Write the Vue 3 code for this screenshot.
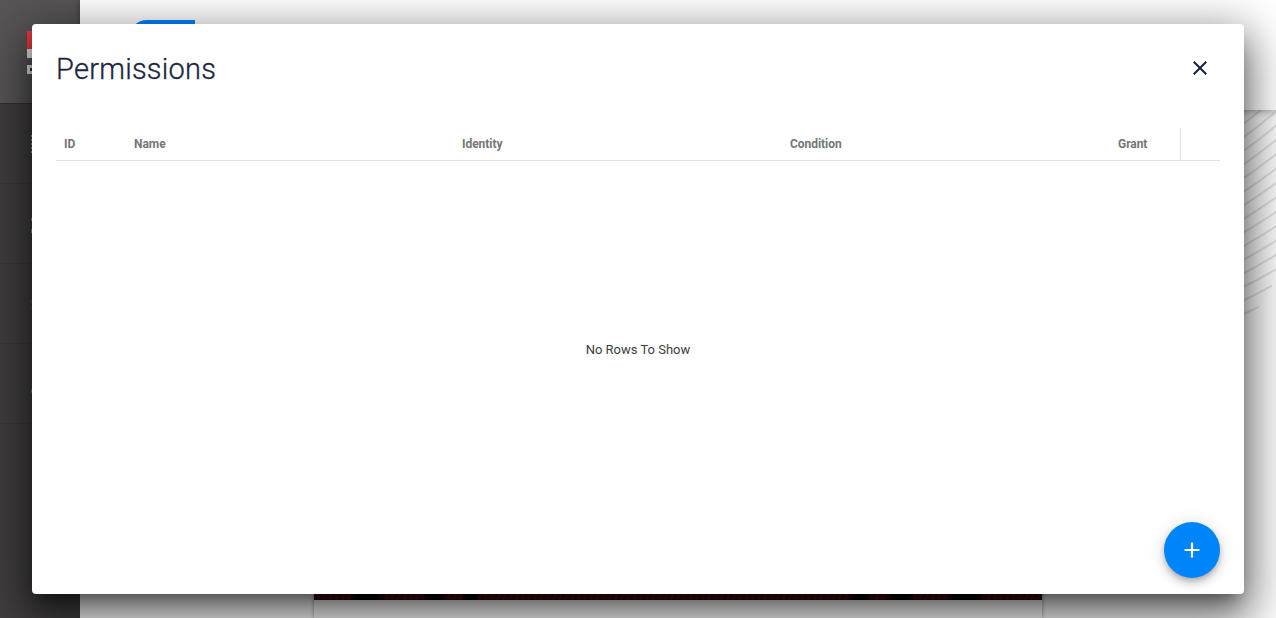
<script setup>
const columns = [
  { label: 'ID', key: 'id' },
  { label: 'Name', key: 'name' },
  { label: 'Identity', key: 'identity' },
  { label: 'Condition', key: 'condition' },
  { label: 'Grant', key: 'grant' },
]
const waves = Array.from({ length: 17 }, (_, i) => {
  const n = i - 2
  const y = 13 + n * 13.6
  const rise = 27 - n * 0.8
  const end = n === 14 ? 15 : n === 13 ? 28 : 33
  return `M-1 ${y + 1} Q 15 ${y - rise * 0.4} ${end} ${y - rise * (end / 33)}`
})
</script>

<template>
  <div class="page">
    <aside class="sidebar">
      <div class="brand"><svg width="53" height="44" viewBox="0 0 53 44"><path fill="#f03a3e" d="M0 0h20v18H0z" /><path fill="#e8e8e8" d="M0 18h20v9H0zM0 34h20v9H0z" /><path fill="#343233" d="M3 37h10v3H3z" /></svg></div>
      <nav>
        <div class="item"><svg width="49" height="40" viewBox="0 0 49 40"><path stroke="#aaa" stroke-dasharray="2 2" d="M.5 11v18" /></svg></div>
        <div class="item"><svg width="49" height="40" viewBox="0 0 49 40"><path stroke="#999" d="M.5 14v3M.5 25v4" /></svg></div>
        <div class="item"><svg width="49" height="40" viewBox="0 0 49 40"><path stroke="#555" d="M.5 16v3M.5 23v2" /></svg></div>
        <div class="item"><svg width="49" height="40" viewBox="0 0 49 40"><path stroke="#888" d="M1 25l-1 4" /></svg></div>
      </nav>
    </aside>
    <main class="main">
      <header class="topbar"><span class="pill"></span></header>
      <div class="content">
        <div class="sheet">
          <div class="photo"></div>
        </div>
        <svg class="waves" width="32" height="210" viewBox="0 0 32 210">
          <path v-for="d in waves" :key="d" :d="d" />
        </svg>
      </div>
    </main>

    <section class="dialog">
      <div class="heading">
        <h1>Permissions</h1>
        <button class="close" aria-label="Close">
          <svg width="24" height="24" viewBox="0 0 24 24"><path fill="currentColor" d="M19 6.41 17.59 5 12 10.59 6.41 5 5 6.41 10.59 12 5 17.59 6.41 19 12 13.41 17.59 19 19 17.59 13.41 12z" /></svg>
        </button>
      </div>
      <div class="grid">
        <div class="grid-head">
          <span v-for="c in columns" :key="c.key" :class="['cell', c.key]">{{ c.label }}</span>
        </div>
        <div class="empty">No Rows To Show</div>
      </div>
      <button class="fab" aria-label="Add">
        <svg width="24" height="24" viewBox="0 0 24 24"><path fill="#fff" d="M19.5 13.1h-6.4v6.4h-2.2v-6.4H4.5v-2.2h6.4V4.5h2.2v6.4h6.4z" /></svg>
      </button>
    </section>
  </div>
</template>

<style>
body { margin: 0; overflow: hidden; }
</style>

<style scoped>
.page { position: relative; display: flex; width: 100%; height: 100vh; overflow: hidden; background: #fff; font-family: Roboto, "Liberation Sans", sans-serif; }
.sidebar { width: 80px; flex: none; background: #403e3f; }
.brand { box-sizing: border-box; height: 103px; padding: 31px 0 0 27px; background: #575556; }
nav { border-top: 1px solid #333132; }
.item { box-sizing: border-box; height: 80px; padding: 20px 0 0 31px; border-bottom: 1px solid #3a3839; }
svg { display: block; }
.main { flex: 1; display: flex; flex-direction: column; }
.topbar { position: relative; box-sizing: border-box; height: 110px; flex: none; padding: 20px 0 0 49px; background: #fff; box-shadow: 0 1px 8px rgba(0,0,0,.4); }
.pill { display: block; width: 66px; height: 36px; background: #0084ff; border-radius: 18px 0 0 18px; }
.content { flex: 1; display: flex; justify-content: space-between; background: #fafafa; }
.sheet { width: 728px; margin-left: 234px; background: #fafafa; box-shadow: 0 0 4px rgba(0,0,0,.4); }
.photo { height: 490px; background: linear-gradient(90deg, transparent 36px, #000 44px 60px, transparent 72px 108px, #000 114px 126px, transparent 132px 148px, #000 152px 160px, transparent 166px 535px, #000 541px 550px, transparent 558px 572px, #000 580px 592px, transparent 602px 634px, #000 640px 662px, transparent 670px), repeating-linear-gradient(105deg, #40090d 0 3px, #5a1419 4px, #300609 6px); }
.waves { fill: none; stroke: #dedede; stroke-width: 2; }
.dialog { position: absolute; inset: 24px 32px; box-sizing: border-box; padding: 24px; display: flex; flex-direction: column; background: #fff; border-radius: 4px; box-shadow: 0 11px 15px -7px rgba(0,0,0,.4), 0 24px 38px 3px rgba(0,0,0,.35), 0 9px 46px 8px rgba(0,0,0,.32); }
.heading { display: flex; justify-content: space-between; height: 80px; color: #1b2440; }
h1 { margin: 0; font-size: 29px; line-height: 42px; font-weight: 300; letter-spacing: .25px; -webkit-text-stroke: .3px currentColor; }
button { border: 0; padding: 0; display: flex; align-items: center; justify-content: center; }
.close { width: 40px; height: 40px; background: none; color: inherit; }
.grid { flex: 1; display: flex; flex-direction: column; }
.grid-head { display: flex; box-sizing: border-box; height: 33px; border-bottom: 1px solid #e2e2e2; font-size: 12px; line-height: 32px; font-weight: 700; letter-spacing: -.05px; color: #757575; }
.cell { box-sizing: border-box; width: 328px; padding-left: 8px; }
.cell.id { width: 70px; }
.cell.grant { width: 71px; border-right: 1px solid #e2e2e2; }
.empty { flex: 1; display: flex; align-items: center; justify-content: center; padding-bottom: 32px; font-size: 13px; color: #3d3d3d; }
.fab { position: absolute; right: 24px; bottom: 16px; width: 56px; height: 56px; border-radius: 50%; background: #0084fa; box-shadow: 0 3px 5px -1px rgba(0,0,0,.2), 0 6px 10px rgba(0,0,0,.14), 0 1px 18px rgba(0,0,0,.12); }
</style>
